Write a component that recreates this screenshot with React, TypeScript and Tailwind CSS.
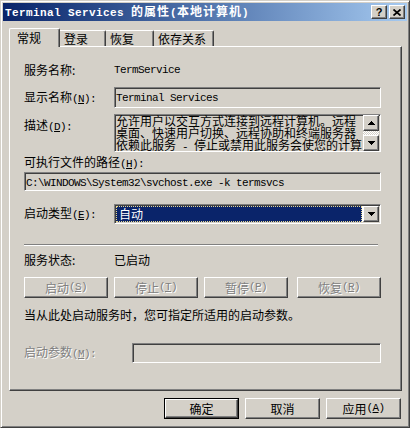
import React from "react";

const sunken =
  "border border-t-[#808080] border-l-[#808080] border-b-white border-r-white shadow-[inset_1px_1px_0_#404040,inset_-1px_-1px_0_#d4d0c8]";
const raised =
  "border border-t-white border-l-white border-b-[#404040] border-r-[#404040] shadow-[inset_-1px_-1px_0_#808080]";
const disabledText = "text-[#808080] [text-shadow:1px_1px_0_#ffffff]";

// half-width latin run, SimSun-like 6px cells
const L = ({ children, b }: { children: React.ReactNode; b?: boolean }) => (
  <span
    className={
      b
        ? "font-['Liberation_Mono'] text-[11px] font-bold tracking-[0.4px] whitespace-pre"
        : "font-['Liberation_Mono'] text-[11px] tracking-[-0.6px] whitespace-pre"
    }
  >
    {children}
  </span>
);

const Key = ({ k }: { k: string }) => (
  <L>
    (<u>{k}</u>)
  </L>
);

const Arrow = ({ down }: { down?: boolean }) => (
  <svg width="7" height="4" viewBox="0 0 7 4" shapeRendering="crispEdges">
    {[0, 1, 2, 3].map((i) => (
      <rect key={i} x={3 - i} y={down ? 3 - i : i} width={2 * i + 1} height="1" fill="#000" />
    ))}
  </svg>
);

const PushButton = ({
  children,
  w,
  disabled,
  isDefault,
}: {
  children: React.ReactNode;
  w: string;
  disabled?: boolean;
  isDefault?: boolean;
}) => {
  const inner = (
    <div
      className={`${raised} bg-[#d4d0c8] h-full flex items-center justify-center leading-none ${
        disabled ? disabledText : "text-black"
      }`}
    >
      {children}
    </div>
  );
  return (
    <div className={`${w} h-[21px] shrink-0 ${isDefault ? "border border-black" : ""}`}>{inner}</div>
  );
};

const Label = ({ children, w = "w-[90px]" }: { children: React.ReactNode; w?: string }) => (
  <div className={`${w} shrink-0 leading-[16px] whitespace-nowrap`}>{children}</div>
);

export default function App() {
  return (
    <div className="w-[410px] h-[428px] bg-[#d4d0c8] font-['Noto_Sans_CJK_SC',sans-serif] text-[12px] text-black overflow-hidden">
      <div className="w-[410px] h-[428px] border border-t-[#d4d0c8] border-l-[#d4d0c8] border-b-[#404040] border-r-[#404040] shadow-[inset_1px_1px_0_#ffffff,inset_-1px_-1px_0_#808080] p-[2px] flex flex-col">
        {/* title bar */}
        <div className="h-[18px] bg-linear-to-r from-[#0a246a] to-[#a6caf0] flex items-center justify-between pl-[2px] pr-[2px]">
          <div className="text-white font-bold leading-none whitespace-nowrap">
            <L b>Terminal Services </L>
            <span className="tracking-[1px]">的属性</span>
            <L b>(</L>
            <span className="tracking-[1px]">本地计算机</span>
            <L b>)</L>
          </div>
          <div className="flex gap-[2px]">
            <div className={`${raised} bg-[#d4d0c8] w-[16px] h-[14px] flex items-center justify-center`}>
              <span className="font-['Liberation_Sans'] font-bold text-[11px] leading-none">?</span>
            </div>
            <div className={`${raised} bg-[#d4d0c8] w-[16px] h-[14px] flex items-center justify-center`}>
              <svg width="8" height="7" viewBox="0 0 8 7">
                <path d="M0.5 0.5 L7.5 6.5 M7.5 0.5 L0.5 6.5" stroke="#000" strokeWidth="1.7" />
              </svg>
            </div>
          </div>
        </div>

        {/* tabs */}
        <div className="relative z-10 ml-[6px] mt-[7px] h-[19px] flex items-end">
          <div className="w-[51px] h-[19px] bg-[#d4d0c8] border-l border-t border-l-white border-t-white border-r border-r-[#404040] shadow-[inset_-1px_0_0_#808080] rounded-t-[2px] pl-[7px] pt-[1px] leading-[16px]">
            常规
          </div>
          {[
            ["登录", "w-[46px]"],
            ["恢复", "w-[48px]"],
            ["依存关系", "w-[60px]"],
          ].map(([t, w]) => (
            <div
              key={t}
              className={`${w} h-[16px] mb-[1px] border-t border-t-white border-r border-r-[#404040] shadow-[inset_-1px_0_0_#808080] rounded-tr-[2px] pl-[4px] leading-[16px] whitespace-nowrap`}
            >
              {t}
            </div>
          ))}
        </div>

        {/* panel */}
        <div
          className={`${raised} relative ml-[6px] -mt-[1px] w-[393px] h-[345px] pl-[14px] flex flex-col`}
        >
          <div className="mt-[15px] h-[16px] flex items-center">
            <Label>服务名称:</Label>
            <L>TermService</L>
          </div>

          <div className="mt-[9px] h-[21px] flex items-center">
            <Label>
              显示名称<Key k="N" />
              <L>:</L>
            </Label>
            <div className={`${sunken} w-[267px] h-[21px] pl-[1px] pt-[1px] leading-[13px]`}>
              <L>Terminal Services</L>
            </div>
          </div>

          <div className="mt-[6px] h-[38px] flex items-start">
            <div className="pt-[3px]">
              <Label>
                描述<Key k="D" />
                <L>:</L>
              </Label>
            </div>
            <div className={`${sunken} w-[267px] h-[38px] px-[1px] flex`}>
              <div className="flex-1 overflow-hidden">
                <div className="leading-[12px] whitespace-nowrap">
                  <div>允许用户以交互方式连接到远程计算机。远程</div>
                  <div>桌面、快速用户切换、远程协助和终端服务器</div>
                  <div>
                    依赖此服务<L> - </L>停止或禁用此服务会使您的计算
                  </div>
                </div>
              </div>
              <div className="w-[16px] flex flex-col">
                <div className={`${raised} bg-[#d4d0c8] h-[16px] flex items-center justify-center`}>
                  <Arrow />
                </div>
                <div className="flex-1 bg-[image:repeating-conic-gradient(#ffffff_0%_25%,#d4d0c8_0%_50%)] bg-[length:2px_2px]" />
                <div className={`${raised} bg-[#d4d0c8] h-[16px] flex items-center justify-center`}>
                  <Arrow down />
                </div>
              </div>
            </div>
          </div>

          <div className="mt-[3px] h-[16px] flex items-center">
            <Label w="w-auto">
              可执行文件的路径<Key k="H" />
              <L>:</L>
            </Label>
          </div>
          <div className={`${sunken} mt-[1px] w-[357px] h-[19px] pl-[1px] pt-[1px] leading-[13px]`}>
            <L>C:\WINDOWS\System32\svchost.exe -k termsvcs</L>
          </div>

          <div className="mt-[13px] h-[20px] flex items-center">
            <Label>
              启动类型<Key k="E" />
              <L>:</L>
            </Label>
            <div className={`${sunken} w-[267px] h-[20px] p-[1px] flex bg-white`}>
              <div className="flex-1 mr-[1px] bg-[#0a246a] border border-dotted border-[#e8d890] text-white pl-[2px] leading-[14px]">
                自动
              </div>
              <div className={`${raised} bg-[#d4d0c8] w-[16px] flex items-center justify-center`}>
                <Arrow down />
              </div>
            </div>
          </div>

          <div className="mt-[20px] w-[354px] h-[2px] border-t border-t-[#808080] border-b border-b-white" />

          <div className="mt-[6px] h-[16px] flex items-center">
            <Label>服务状态:</Label>
            <div className="leading-[16px]">已启动</div>
          </div>

          <div className="mt-[9px] flex">
            <PushButton w="w-[84px]" disabled>
              启动<Key k="S" />
            </PushButton>
            <div className="ml-[6px]">
              <PushButton w="w-[84px]" disabled>
                停止<Key k="T" />
              </PushButton>
            </div>
            <div className="ml-[6px]">
              <PushButton w="w-[84px]" disabled>
                暂停<Key k="P" />
              </PushButton>
            </div>
            <div className="ml-[9px]">
              <PushButton w="w-[84px]" disabled>
                恢复<Key k="R" />
              </PushButton>
            </div>
          </div>

          <div className="mt-[9px] h-[16px] leading-[16px] whitespace-nowrap">
            当从此处启动服务时，您可指定所适用的启动参数。
          </div>

          <div className="mt-[20px] h-[20px] flex items-center">
            <Label w="w-[108px]">
              <span className={disabledText}>
                启动参数<Key k="M" />
                <L>:</L>
              </span>
            </Label>
            <div className={`${sunken} w-[249px] h-[20px]`} />
          </div>
        </div>

        {/* dialog buttons */}
        <div className="mt-[7px] pr-[6px] flex justify-end gap-[6px]">
          <PushButton w="w-[75px]" isDefault>
            确定
          </PushButton>
          <PushButton w="w-[75px]">取消</PushButton>
          <PushButton w="w-[75px]">
            应用<Key k="A" />
          </PushButton>
        </div>
      </div>
    </div>
  );
}
